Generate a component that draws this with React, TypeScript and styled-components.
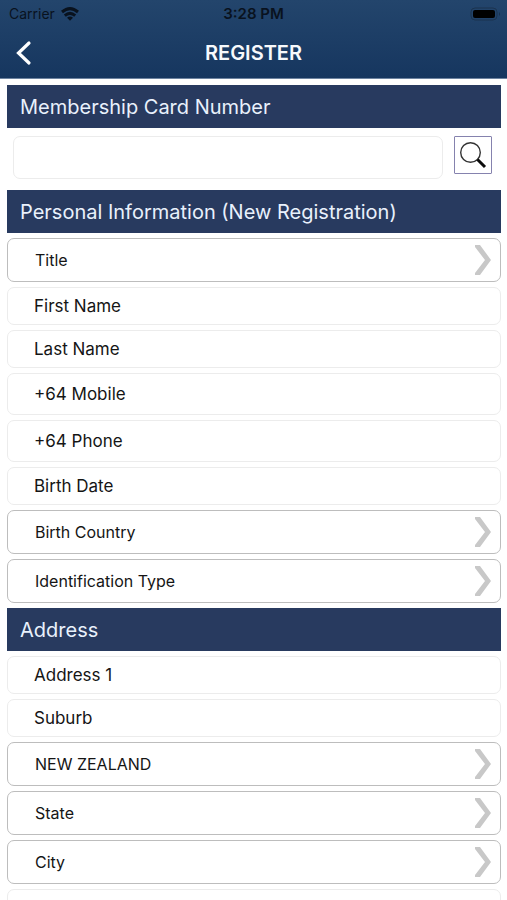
import React from "react";
import styled, { createGlobalStyle } from "styled-components";

const GlobalStyle = createGlobalStyle`
  *, *::before, *::after { box-sizing: border-box; }
  body {
    margin: 0;
    background: #ffffff;
    color: #151515;
    font-family: Inter, "Liberation Sans", sans-serif;
  }
  button, input, select { font: inherit; color: inherit; }
`;

const Screen = styled.div`
  height: 100vh;
  display: flex;
  flex-direction: column;
  overflow: hidden;
`;

const Header = styled.header`
  flex: none;
  background: linear-gradient(#23456c, #16365f);
  border-bottom: 1px solid #6d83a0;
`;

const Columns = styled.div<{ $height: number }>`
  display: grid;
  grid-template-columns: 1fr auto 1fr;
  align-items: center;
  height: ${(p) => p.$height}px;
`;

const Carrier = styled.div`
  display: flex;
  align-items: center;
  gap: 6px;
  padding-left: 9px;
  font-size: 14px;
  color: #09121e;
`;

const Clock = styled.time`
  font-size: 15px;
  font-weight: 600;
  color: #09121e;
`;

const BatteryIcon = styled.svg`
  justify-self: end;
  margin-right: 5px;
`;

const BackButton = styled.button`
  justify-self: start;
  display: flex;
  margin-left: 12px;
  padding: 0 4px;
  border: 0;
  background: none;
  cursor: pointer;
`;

const PageTitle = styled.h1`
  margin: 0;
  font-size: 20px;
  line-height: 24px;
  font-weight: 600;
  color: #f7f9fc;
`;

const Form = styled.form`
  flex: 1;
  min-height: 0;
  overflow: hidden;
  padding: 6px 6px 0 7px;
`;

const Section = styled.section`
  display: flex;
  flex-direction: column;
  gap: 5px;
  margin-bottom: 5px;
`;

const SectionTitle = styled.h2`
  flex: none;
  margin: 0;
  padding: 1px 13px 0;
  background: #283a5f;
  color: #e9f1fc;
  font-size: 20px;
  line-height: 42px;
  font-weight: 400;
`;

const SearchRow = styled.div`
  display: flex;
  align-items: flex-start;
  gap: 11px;
  padding: 3px 9px 6px 6px;
`;

const TextInput = styled.input<{ $height: number }>`
  flex: none;
  width: 100%;
  min-width: 0;
  height: ${(p) => p.$height}px;
  padding: 0 26px;
  border: 1px solid #ececec;
  border-radius: 7px;
  background: #ffffff;
  font-size: 17px;
  &::placeholder { color: #151515; opacity: 1; }
`;

const CardInput = styled(TextInput)`
  flex: 1;
`;

const SearchButton = styled.button`
  display: grid;
  place-items: center;
  width: 38px;
  height: 38px;
  padding: 0;
  border: 1px solid #8582ae;
  border-radius: 1px;
  background: #ffffff;
  cursor: pointer;
`;

const SelectBox = styled.div`
  display: grid;
  align-items: center;
`;

const Select = styled.select`
  grid-area: 1 / 1;
  appearance: none;
  width: 100%;
  height: 44px;
  padding: 0 48px 0 27px;
  border: 1px solid #bdbdbd;
  border-radius: 7px;
  background: #ffffff;
  font-size: 16px;
`;

const Chevron = styled.svg`
  grid-area: 1 / 1;
  justify-self: end;
  margin-right: 8px;
  pointer-events: none;
`;

function Choice({ label }: { label: string }) {
  return (
    <SelectBox>
      <Select aria-label={label === "NEW ZEALAND" ? "Country" : label}>
        <option>{label}</option>
      </Select>
      <Chevron width="20" height="32" viewBox="0 0 20 32" aria-hidden="true">
        <path d="M2 1H7L18 16L7 31H2V29L12 16L2 3Z" fill="#c8c8c8" />
      </Chevron>
    </SelectBox>
  );
}

function Field({ label, type = "text" }: { label: string; type?: string }) {
  return (
    <TextInput
      $height={type === "tel" ? 42 : 38}
      type={type}
      placeholder={label}
      aria-label={label}
    />
  );
}

export default function App() {
  return (
    <>
      <GlobalStyle />
      <Screen>
        <Header>
          <Columns $height={27}>
            <Carrier>
              Carrier
              <svg width="18" height="14" viewBox="0 0 18 14" aria-hidden="true">
                <g fill="none" stroke="#09121e" strokeWidth="3">
                  <path d="M1 5Q9 -1.8 17 5" />
                  <path d="M3.8 8.6Q9 4.2 14.2 8.6" />
                </g>
                <path d="M6 10.8Q9 8.4 12 10.8L9 13.8Z" fill="#09121e" />
              </svg>
            </Carrier>
            <Clock>3:28 PM</Clock>
            <BatteryIcon width="32" height="14" viewBox="0 0 32 14" aria-label="Battery full">
              <rect x="1" y="1" width="26" height="12" rx="4" fill="none" stroke="#1b334f" />
              <rect x="3" y="3" width="22" height="8" rx="2" fill="#000000" />
              <path d="M29 5Q31 7 29 9Z" fill="#17304d" />
            </BatteryIcon>
          </Columns>
          <Columns $height={51}>
            <BackButton type="button" aria-label="Back">
              <svg width="16" height="26" viewBox="0 0 16 26" aria-hidden="true">
                <path d="M13 3L2.5 13L13 23" fill="none" stroke="#ffffff" strokeWidth="3.2" strokeLinecap="round" />
              </svg>
            </BackButton>
            <PageTitle>REGISTER</PageTitle>
          </Columns>
        </Header>
        <Form onSubmit={(e) => e.preventDefault()}>
          <Section>
            <SectionTitle>Membership Card Number</SectionTitle>
            <SearchRow>
              <CardInput $height={43} type="text" aria-label="Membership Card Number" />
              <SearchButton type="submit" aria-label="Search">
                <svg width="28" height="28" viewBox="0 0 28 28" aria-hidden="true">
                  <circle cx="11.5" cy="11.5" r="9.8" fill="none" stroke="#333333" strokeWidth="1.4" />
                  <path d="M18.5 18.5L26 26" stroke="#0c0c0c" strokeWidth="3" />
                </svg>
              </SearchButton>
            </SearchRow>
          </Section>
          <Section>
            <SectionTitle>Personal Information (New Registration)</SectionTitle>
            <Choice label="Title" />
            <Field label="First Name" />
            <Field label="Last Name" />
            <Field label="+64 Mobile" type="tel" />
            <Field label="+64 Phone" type="tel" />
            <Field label="Birth Date" />
            <Choice label="Birth Country" />
            <Choice label="Identification Type" />
          </Section>
          <Section>
            <SectionTitle>Address</SectionTitle>
            <Field label="Address 1" />
            <Field label="Suburb" />
            <Choice label="NEW ZEALAND" />
            <Choice label="State" />
            <Choice label="City" />
            <TextInput $height={38} type="text" aria-label="Postcode" />
          </Section>
        </Form>
      </Screen>
    </>
  );
}
